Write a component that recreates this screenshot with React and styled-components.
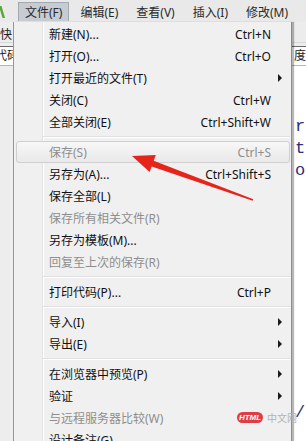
import React from "react";
import styled, { createGlobalStyle } from "styled-components";

const GlobalStyle = createGlobalStyle`
  html, body {
    margin: 0;
    padding: 0;
    background: #ffffff;
  }
  body {
    font-family: "Noto Sans", "Noto Sans CJK SC", sans-serif;
  }
`;

const topMenus = ["文件(F)", "编辑(E)", "查看(V)", "插入(I)", "修改(M)"];

const fileMenu = [
  { label: "新建(N)...", shortcut: "Ctrl+N" },
  { label: "打开(O)...", shortcut: "Ctrl+O" },
  { label: "打开最近的文件(T)", sub: true },
  { label: "关闭(C)", shortcut: "Ctrl+W" },
  { label: "全部关闭(E)", shortcut: "Ctrl+Shift+W" },
  { separator: true },
  { label: "保存(S)", shortcut: "Ctrl+S", disabled: true, hover: true },
  { label: "另存为(A)...", shortcut: "Ctrl+Shift+S" },
  { label: "保存全部(L)" },
  { label: "保存所有相关文件(R)", disabled: true },
  { label: "另存为模板(M)..." },
  { label: "回复至上次的保存(R)", disabled: true },
  { separator: true },
  { label: "打印代码(P)...", shortcut: "Ctrl+P" },
  { separator: true },
  { label: "导入(I)", sub: true },
  { label: "导出(E)", sub: true },
  { separator: true },
  { label: "在浏览器中预览(P)", sub: true },
  { label: "验证", sub: true },
  { label: "与远程服务器比较(W)", disabled: true },
  { label: "设计备注(G)..." },
];

const codeLines = ["", "", "r", "t", "o", "", "", "", "", "", "", "", "", "", "", "/"];

const App = () => {
  return (
    <>
      <GlobalStyle />
      <Page>
        <MenuBar>
          <Logo width="6" height="12" viewBox="0 0 6 12">
            <path d="M0 0 L2.5 0 L6 12 L3.5 12 Z" fill="#5aa63a" />
          </Logo>
          {topMenus.map((m, i) => (
            <TopItem key={m} active={i === 0}>
              {m}
            </TopItem>
          ))}
        </MenuBar>

        <Body>
          <LeftPane>
            <ToolRow>快</ToolRow>
            <TabBox>
              <TabText offset={-5}>代码</TabText>
            </TabBox>
          </LeftPane>

          <Menu>
            {fileMenu.map((item, i) =>
              item.separator ? (
                <Separator key={i} />
              ) : (
                <Item key={i} disabled={item.disabled} hover={item.hover}>
                  <Label>{item.label}</Label>
                  <Shortcut>{item.shortcut}</Shortcut>
                  <ArrowCell>{item.sub && <SubArrow />}</ArrowCell>
                </Item>
              )
            )}
          </Menu>

          <RightPane>
            <ToolRow />
            <TabBox>
              <TabText offset={2}>度</TabText>
            </TabBox>
            <Code>
              {codeLines.map((l, i) => (
                <CodeLine key={i}>{l}</CodeLine>
              ))}
            </Code>
          </RightPane>
        </Body>

        <Watermark>
          <HtmlPill>HTML</HtmlPill>
          <WatermarkText>中文网</WatermarkText>
        </Watermark>

        <Overlay width="306" height="441" viewBox="0 0 306 441">
          <polygon
            points="132,156 155.8,155.1 153.7,160.8 253.3,199.3 252.7,200.7 151.7,166.4 149.6,172.1"
            fill="#e5251c"
          />
        </Overlay>
      </Page>
    </>
  );
};

export default App;

const Page = styled.div`
  position: relative;
  width: 306px;
  height: 441px;
  overflow: hidden;
  display: flex;
  flex-direction: column;
  background: #f0f0f0;
`;

const MenuBar = styled.div`
  height: 22px;
  display: flex;
  align-items: center;
  gap: 4px;
  background: #e9e9e9;
  flex-shrink: 0;
`;

const Logo = styled.svg`
  display: block;
  margin: 2px 9px 0 -1px;
`;

const TopItem = styled.div`
  height: 19px;
  margin-top: 1px;
  padding: 0 6px;
  box-sizing: border-box;
  display: flex;
  align-items: center;
  font-size: 12px;
  color: #2a2a2a;
  border: 1px solid ${(p) => (p.active ? "#a3a9b0" : "transparent")};
  border-bottom: none;
  background: ${(p) => (p.active ? "#c7ccd2" : "transparent")};
`;

const Body = styled.div`
  flex: 1;
  display: flex;
  min-height: 0;
`;

const LeftPane = styled.div`
  width: 13px;
  flex-shrink: 0;
  overflow: hidden;
  display: flex;
  flex-direction: column;
  background: #ededed;
`;

const ToolRow = styled.div`
  height: 21px;
  box-sizing: border-box;
  padding-top: 5px;
  font-size: 12px;
  line-height: 16px;
  color: #222;
  border-bottom: 1px solid #d8d8d8;
  white-space: nowrap;
`;

const TabBox = styled.div`
  margin-top: 3px;
  height: 20px;
  box-sizing: border-box;
  border-top: 1px solid #6a6a6a;
  border-bottom: 1px solid #b5b5b5;
  background: #ffffff;
  font-size: 12px;
  line-height: 18px;
  color: #222;
  white-space: nowrap;
`;

const TabText = styled.span`
  display: inline-block;
  margin-left: ${(p) => p.offset}px;
`;

const Menu = styled.div`
  position: relative;
  z-index: 1;
  width: 279px;
  flex-shrink: 0;
  box-sizing: border-box;
  padding-top: 1px;
  border-left: 1px solid #979797;
  border-right: 1px solid #8c8c8c;
  background: linear-gradient(
    to right,
    #f0f0f0 28px,
    #e2e3e3 28px,
    #e2e3e3 29px,
    #ffffff 29px,
    #ffffff 30px,
    #f0f0f0 30px
  );
  box-shadow: 2px 0 1px rgba(0, 0, 0, 0.28);
`;

const Item = styled.div`
  height: 22px;
  margin: 0 1px 0 2px;
  box-sizing: border-box;
  padding-left: 32px;
  display: grid;
  grid-template-columns: 1fr auto 18px;
  align-items: center;
  font-size: 12px;
  color: ${(p) => (p.disabled ? "#8e8e8e" : "#111111")};
  border: 1px solid ${(p) => (p.hover ? "#cfcfcf" : "transparent")};
  border-radius: 3px;
  background: ${(p) =>
    p.hover ? "linear-gradient(to bottom, #f7f7f7, #e9e9e9)" : "transparent"};
`;

const Label = styled.span`
  white-space: nowrap;
`;

const Shortcut = styled.span`
  white-space: nowrap;
`;

const ArrowCell = styled.span`
  display: flex;
  align-items: center;
  padding-left: 7px;
`;

const SubArrow = styled.span`
  width: 0;
  height: 0;
  border-top: 4px solid transparent;
  border-bottom: 4px solid transparent;
  border-left: 4px solid #1a1a1a;
`;

const Separator = styled.div`
  height: 8px;
  box-sizing: border-box;
  margin-left: 29px;
  margin-right: 1px;
  padding-top: 3px;

  &::after {
    content: "";
    display: block;
    border-top: 1px solid #e0e0e0;
    border-bottom: 1px solid #ffffff;
  }
`;

const RightPane = styled.div`
  flex: 1;
  overflow: hidden;
  display: flex;
  flex-direction: column;
  background: #ececec;
`;

const Code = styled.div`
  flex: 1;
  background: #ffffff;
  padding: 6px 0 0 3px;
  font-family: "Liberation Mono", monospace;
  font-size: 17px;
  color: #2b3179;
`;

const CodeLine = styled.div`
  height: 22px;
  line-height: 22px;
  white-space: pre;
`;

const Watermark = styled.div`
  position: absolute;
  left: 237px;
  top: 410px;
  z-index: 2;
  display: flex;
  align-items: center;
  gap: 4px;
  pointer-events: none;
`;

const HtmlPill = styled.span`
  width: 26px;
  height: 11px;
  border-radius: 6px;
  background: #de3d45;
  color: #ffffff;
  font-family: "Liberation Sans", sans-serif;
  font-size: 8px;
  font-weight: bold;
  font-style: italic;
  line-height: 11px;
  text-align: center;
`;

const WatermarkText = styled.span`
  font-size: 10px;
  color: #b3b3b3;
  font-family: "Noto Sans CJK SC", sans-serif;
`;

const Overlay = styled.svg`
  position: absolute;
  left: 0;
  top: 0;
  z-index: 3;
  pointer-events: none;
`;
